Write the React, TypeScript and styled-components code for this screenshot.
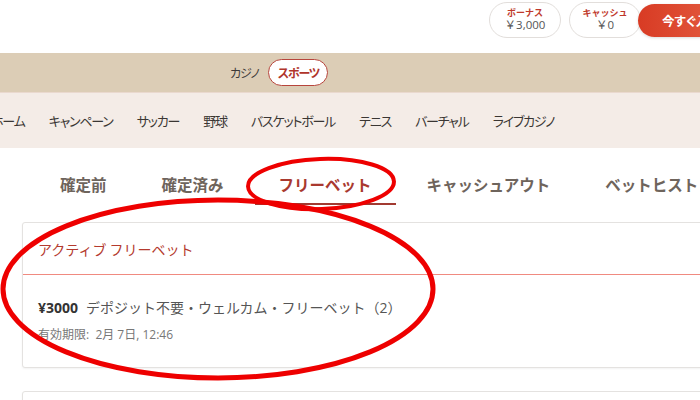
import React from 'react';
import styled, { createGlobalStyle } from 'styled-components';

const GlobalStyle = createGlobalStyle`
  body {
    margin: 0;
    overflow: hidden;
    background: #fff;
    font-family: "Open Sans", "Noto Sans CJK JP", sans-serif;
  }
`;

const Page = styled.div`
  position: relative;
  width: 700px;
  height: 400px;
  overflow: hidden;
`;

const TopBar = styled.header`
  height: 53px;
  display: flex;
  justify-content: flex-end;
  align-items: flex-start;
  padding-top: 2px;
  box-sizing: border-box;
  gap: 8px;
  margin-right: -62px;
`;

const WalletPill = styled.div`
  width: 72px;
  height: 36px;
  box-sizing: border-box;
  border: 1px solid #e2dedb;
  border-radius: 18px;
  background: #fff;
  display: flex;
  flex-direction: column;
  align-items: center;
  justify-content: center;
  line-height: 1.25;
`;

const PillLabel = styled.span`
  font-size: 9px;
  font-weight: 700;
  color: #c0392b;
`;

const PillValue = styled.span`
  font-size: 11.5px;
  color: #555;
`;

const DepositButton = styled.button`
  margin-left: -11px;
  margin-top: 2px;
  height: 33px;
  width: 124px;
  border: none;
  border-radius: 17px;
  background: linear-gradient(90deg, #d83b24, #e8694c);
  color: #fff;
  font: 700 12.5px "Noto Sans CJK JP", sans-serif;
  font-feature-settings: "palt";
  text-align: left;
  padding-left: 24px;
  box-shadow: 0 1px 3px rgba(0, 0, 0, 0.15);
`;

const CategoryBand = styled.div`
  height: 40px;
  background: #dccdb6;
  display: flex;
  align-items: center;
  padding-left: 230px;
  gap: 9px;
  border-bottom: 1px solid #ead9cf;
  box-sizing: border-box;
`;

const CategoryLink = styled.span<{ active?: boolean }>`
  font-family: "Noto Sans CJK JP", sans-serif;
  font-feature-settings: "palt";
  font-size: 12px;
  letter-spacing: -1.1px;
  display: inline-flex;
  align-items: center;
  ${({ active }) =>
    active
      ? `
    height: 27px;
    padding: 0 8px 0 9px;
    border: 1.5px solid #b7453c;
    border-radius: 14px;
    background: #fff;
    color: #b0352b;
    font-weight: 700;
    box-sizing: border-box;
  `
      : `color: #3d3a38;`}
`;

const SportsNav = styled.nav`
  height: 55px;
  background: #f4ece7;
  display: flex;
  align-items: center;
  gap: 24px;
  margin-left: -9px;
`;

const NavItem = styled.span`
  font-family: "Noto Sans CJK JP", sans-serif;
  font-feature-settings: "palt";
  font-size: 13px;
  letter-spacing: -1.2px;
  color: #3a3633;
  white-space: nowrap;
`;

const Tabs = styled.div`
  display: flex;
  padding: 16px 0 0 36px;
  gap: 7px;
  margin-bottom: 17px;
  white-space: nowrap;
`;

const Tab = styled.div<{ active?: boolean }>`
  height: 39px;
  padding: 0 24px;
  display: flex;
  align-items: center;
  font-family: "Noto Sans CJK JP", sans-serif;
  font-size: 15.5px;
  font-weight: 700;
  color: ${({ active }) => (active ? '#a9392f' : '#6e645c')};
  border-bottom: 2px solid ${({ active }) => (active ? '#a23a31' : 'transparent')};
`;

const Card = styled.section`
  margin-left: 22px;
  width: 720px;
  border: 1px solid #e4e2e0;
  border-radius: 3px;
  box-shadow: 0 1px 2px rgba(0, 0, 0, 0.05);
  background: #fff;
  & + & {
    margin-top: 23px;
  }
`;

const CardHeader = styled.div`
  height: 51px;
  display: flex;
  align-items: center;
  padding-left: 15px;
  font-family: "Noto Sans CJK JP", sans-serif;
  font-size: 14px;
  color: #b43a2e;
  border-bottom: 1.5px solid #f08a80;
`;

const CardBody = styled.div`
  padding: 23px 15px 24px;
`;

const OfferLine = styled.div`
  font-size: 14px;
  line-height: 20px;
  color: #555;
  display: flex;
  gap: 8px;
`;

const Amount = styled.strong`
  font-family: "Open Sans", sans-serif;
  color: #333;
`;

const Expiry = styled.div`
  margin-top: 8px;
  font-size: 12px;
  line-height: 17px;
  color: #777;
`;

const Annotations = styled.svg`
  position: absolute;
  top: 0;
  left: 0;
  pointer-events: none;
`;

const navItems = ['ホーム', 'キャンペーン', 'サッカー', '野球', 'バスケットボール', 'テニス', 'バーチャル', 'ライブカジノ'];
const tabs = ['確定前', '確定済み', 'フリーベット', 'キャッシュアウト', 'ベットヒストリー'];

export default function App() {
  return (
    <Page>
      <GlobalStyle />
      <TopBar>
        <WalletPill>
          <PillLabel>ボーナス</PillLabel>
          <PillValue>￥3,000</PillValue>
        </WalletPill>
        <WalletPill>
          <PillLabel>キャッシュ</PillLabel>
          <PillValue>￥0</PillValue>
        </WalletPill>
        <DepositButton>今すぐ入金</DepositButton>
      </TopBar>
      <CategoryBand>
        <CategoryLink>カジノ</CategoryLink>
        <CategoryLink active>スポーツ</CategoryLink>
      </CategoryBand>
      <SportsNav>
        {navItems.map((n) => (
          <NavItem key={n}>{n}</NavItem>
        ))}
      </SportsNav>
      <Tabs>
        {tabs.map((t) => (
          <Tab key={t} active={t === 'フリーベット'}>
            {t}
          </Tab>
        ))}
      </Tabs>
      <Card>
        <CardHeader>アクティブ フリーベット</CardHeader>
        <CardBody>
          <OfferLine>
            <Amount>¥3000</Amount>
            <span>デポジット不要・ウェルカム・フリーベット（2）</span>
          </OfferLine>
          <Expiry>有効期限:&nbsp; 2月 7日, 12:46</Expiry>
        </CardBody>
      </Card>
      <Card>
        <CardHeader>&nbsp;</CardHeader>
      </Card>
      <Annotations width="700" height="400" viewBox="0 0 700 400">
        <ellipse cx="321" cy="184" rx="73" ry="25" transform="rotate(-2 321 184)" fill="none" stroke="#ee0000" strokeWidth="4" />
        <ellipse cx="218" cy="289" rx="215" ry="89" fill="none" stroke="#ee0000" strokeWidth="5" />
      </Annotations>
    </Page>
  );
}
